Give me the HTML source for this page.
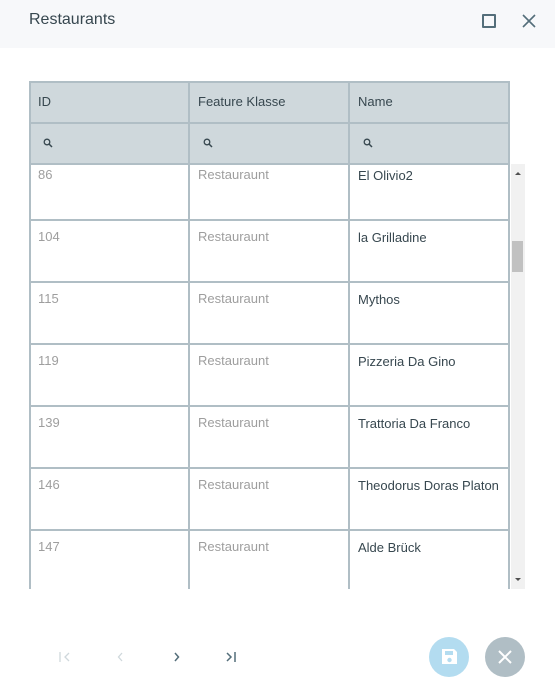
<!DOCTYPE html>
<html><head><style>
*{margin:0;padding:0;box-sizing:border-box}
body{width:555px;height:690px;background:#fff;font-family:"Liberation Sans",sans-serif;position:relative;overflow:hidden}
.hdr{position:absolute;left:0;top:0;width:555px;height:48px;background:#f7f8fa}
.title{position:absolute;left:29px;top:11px;font-size:16px;color:#37474f}
.a{position:absolute}
.th{position:absolute;background:#cfd8dc;border:2px solid #b0bec5}
.txt{position:absolute;font-size:13px}
.g{color:#9e9e9e}.d{color:#37474f}
</style></head><body>
<div class="hdr"></div>
<div class="title">Restaurants</div>
<div class="a" style="left:482px;top:14px;width:14px;height:14px;border:2px solid #546e7a;border-radius:1px"></div>
<svg class="a" style="left:521px;top:13px" width="16" height="16"><path d="M2 2L14 14M14 2L2 14" stroke="#546e7a" stroke-width="1.6"/></svg>

<div class="a" style="left:29px;top:81px;width:480px;height:84px;background:#cfd8dc"></div>
<div id="grid"></div>
<div class="a" style="left:511px;top:164px;width:14px;height:425px;background:#f1f1f1"></div>
<div class="a" style="left:512px;top:241px;width:11px;height:31px;background:#c1c1c1"></div>
<svg class="a" style="left:513px;top:169px" width="10" height="8"><path d="M2 6L5 3L8 6Z" fill="#505050"/></svg>
<svg class="a" style="left:513px;top:576px" width="10" height="8"><path d="M2 2L5 5L8 2Z" fill="#505050"/></svg>

<script>
var h='';
var L='#b0bec5';
function line(x,y,w,hh){h+='<div class="a" style="left:'+x+'px;top:'+y+'px;width:'+w+'px;height:'+hh+'px;background:'+L+'"></div>';}
[29,188,348,508].forEach(function(x){line(x,81,2,508);});
[81,122,163,219,281,343,405,467,529].forEach(function(y){line(29,y,481,2);});
var heads=['ID','Feature Klasse','Name'],xs=[38,198,358];
heads.forEach(function(t,i){h+='<div class="txt" style="left:'+xs[i]+'px;top:94px;color:#37474f">'+t+'</div>';
h+='<svg class="a" style="left:'+(xs[i]+5)+'px;top:138px" width="10" height="10"><circle cx="4" cy="4" r="2.8" stroke="#37474f" stroke-width="1.3" fill="none"/><path d="M6 6L9 9" stroke="#37474f" stroke-width="1.5"/></svg>';});
var rows=[['86','El Olivio2'],['104','la Grilladine'],['115','Mythos'],['119','Pizzeria Da Gino'],['139','Trattoria Da Franco'],['146','Theodorus Doras Platon'],['147','Alde Brück']];
rows.forEach(function(r,i){var y=167+i*62;
h+='<div class="txt g" style="left:38px;top:'+y+'px">'+r[0]+'</div>';
h+='<div class="txt g" style="left:198px;top:'+y+'px">Restauraunt</div>';
h+='<div class="txt d" style="left:358px;top:'+(y+1)+'px">'+r[1]+'</div>';});
document.getElementById('grid').innerHTML=h;
</script>

<svg class="a" style="left:58px;top:650px" width="16" height="14"><path d="M2 2V12M11 3L7 7L11 11" stroke="#cfd8dc" stroke-width="1.3" fill="none"/></svg>
<svg class="a" style="left:114px;top:650px" width="14" height="14"><path d="M8 3L4.5 7L8 11" stroke="#cfd8dc" stroke-width="1.3" fill="none"/></svg>
<svg class="a" style="left:170px;top:650px" width="14" height="14"><path d="M5 3L8.5 7L5 11" stroke="#546e7a" stroke-width="1.5" fill="none"/></svg>
<svg class="a" style="left:224px;top:650px" width="16" height="14"><path d="M3 3L7 7L3 11M11 2V12" stroke="#546e7a" stroke-width="1.5" fill="none"/></svg>

<div class="a" style="left:429px;top:637px;width:40px;height:40px;border-radius:50%;background:#b3dcf0"></div>
<svg class="a" style="left:439px;top:647px" width="20" height="20"><path d="M3 2H15L18 5V17H3Z" fill="#fff"/><rect x="6" y="4" width="8" height="4" fill="#b3dcf0"/><circle cx="10.5" cy="13" r="2.2" fill="#b3dcf0"/></svg>
<div class="a" style="left:485px;top:637px;width:40px;height:40px;border-radius:50%;background:#b0bec5"></div>
<svg class="a" style="left:496px;top:648px" width="18" height="18"><path d="M3 3L15 15M15 3L3 15" stroke="#fff" stroke-width="2"/></svg>
</body></html>
